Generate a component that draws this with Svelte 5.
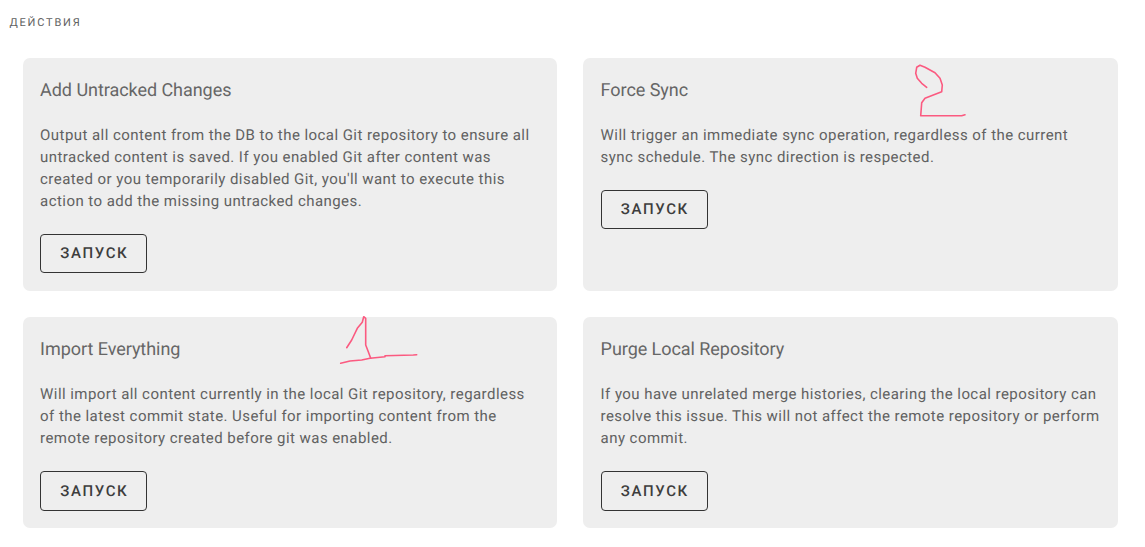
<script>
	const actions = [
		{
			title: 'Add Untracked Changes',
			text: "Output all content from the DB to the local Git repository to ensure all untracked content is saved. If you enabled Git after content was created or you temporarily disabled Git, you'll want to execute this action to add the missing untracked changes."
		},
		{
			title: 'Force Sync',
			text: 'Will trigger an immediate sync operation, regardless of the current sync schedule. The sync direction is respected.'
		},
		{
			title: 'Import Everything',
			text: 'Will import all content currently in the local Git repository, regardless of the latest commit state. Useful for importing content from the remote repository created before git was enabled.'
		},
		{
			title: 'Purge Local Repository',
			text: 'If you have unrelated merge histories, clearing the local repository can resolve this issue. This will not affect the remote repository or perform any commit.'
		}
	];
</script>

<div class="page">
	<div class="caption">Действия</div>

	<div class="grid">
		{#each actions as action}
			<section class="card">
				<h3>{action.title}</h3>
				<p>{action.text}</p>
				<button>Запуск</button>
			</section>
		{/each}
	</div>

	<!-- hand-drawn marks over the cards -->
	<svg class="marks" width="1145" height="547" viewBox="0 0 1145 547" aria-hidden="true">
		<polyline points="926.7,87.3 921.7,83.3 917.3,78.3 915.7,73.3 916.7,67.3 920,65.3 925,67.3 935,72.7 940,78.3 942.3,85 941.7,91.7 933.3,95 925,98.3 921.7,102.7 920.7,115.7 961.7,115.7 965,114.7" />
		<polyline points="346.7,347.7 351.7,340 357.3,328.3 362.3,322.3 363.7,316.7 365.7,318.3 365.7,345 368.3,351.7 370.7,358.3" />
		<polyline points="340.7,363.3 350,361 361.7,360 370,358.3 385,356.7 385,355.7 413.3,355 416.7,354.7" />
	</svg>
</div>

<style>
	:global(body) {
		background: #fff;
	}

	.page {
		position: relative;
		height: 547px;
		overflow: hidden;
		box-sizing: border-box;
		padding-top: 16px;
		font-family: Roboto, 'Liberation Sans', sans-serif;
		text-rendering: geometricPrecision;
	}

	.caption {
		margin-left: 9.5px;
		font-size: 11px;
		line-height: 13px;
		letter-spacing: 1.8px;
		text-transform: uppercase;
		color: #616161;
	}

	.grid {
		display: grid;
		grid-template-columns: 1fr 1fr;
		gap: 26.8px 26px;
		margin: 28.6px 27.1px 0 22.9px;
	}

	.card {
		display: flex;
		flex-direction: column;
		align-items: flex-start;
		padding: 21.1px 17px 17.8px 17.2px;
		background: #eeeeee;
		border-radius: 7px;
	}

	h3 {
		margin: 0 0 20.9px;
		font-size: 18px;
		font-weight: 400;
		line-height: 24px;
		letter-spacing: -0.05px;
		color: #666;
	}

	p {
		margin: 0 0 22px;
		font-size: 15px;
		line-height: 22px;
		letter-spacing: 0.44px;
		color: #616161;
	}

	button {
		width: 107px;
		height: 39.2px;
		padding: 0 0 0.7px 1.5px;
		background: transparent;
		border: 1px solid #333;
		border-radius: 4px;
		font-family: inherit;
		font-size: 15px;
		font-weight: 500;
		letter-spacing: 1.6px;
		text-transform: uppercase;
		color: #3d3d3d;
		text-rendering: geometricPrecision;
	}

	.marks {
		position: absolute;
		top: 0;
		left: 0;
		pointer-events: none;
	}

	.marks polyline {
		fill: none;
		stroke: #fb5a80;
		stroke-width: 1.6;
		stroke-linejoin: round;
		stroke-linecap: round;
	}
</style>
